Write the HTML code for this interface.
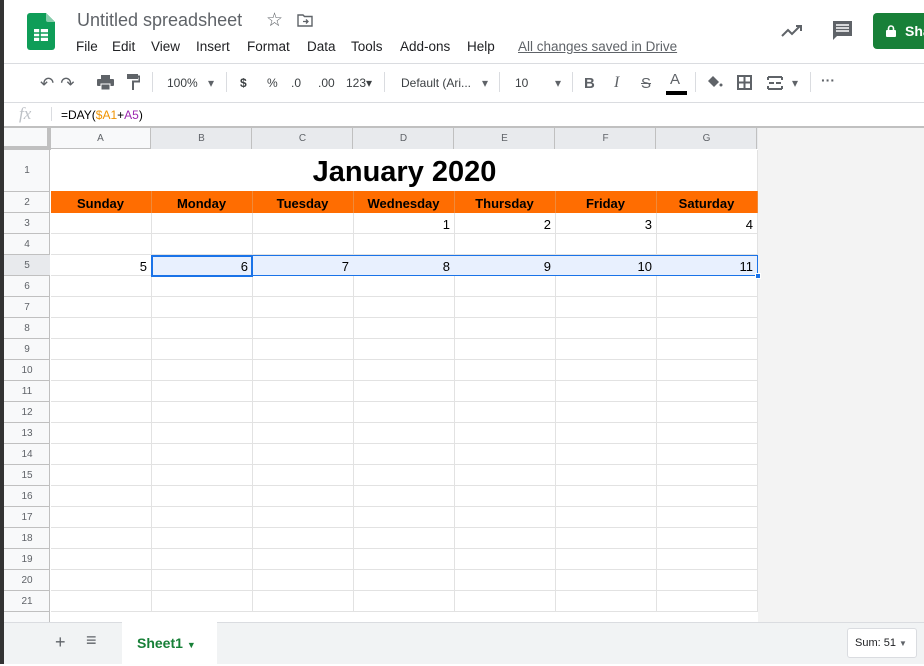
<!DOCTYPE html>
<html><head><meta charset="utf-8"><style>
*{margin:0;padding:0;box-sizing:border-box}
body{width:924px;height:664px;overflow:hidden;background:#fff;font-family:"Liberation Sans",Arial,sans-serif;position:relative;color:#202124}
.a{position:absolute}
.m{position:absolute;top:39px;font-size:13.5px;color:#202124;white-space:nowrap}
.tb{color:#5f6368;font-size:12px}
.rh{position:absolute;left:4px;width:46px;text-align:center;font-size:10px;color:#5f6368}
.ch{position:absolute;top:128px;height:21px;width:101px;text-align:center;font-size:10px;color:#5f6368;line-height:21px}
.day{position:absolute;top:192px;height:21px;width:101px;text-align:center;font-weight:bold;font-size:13px;line-height:23px;color:#000}
.n{position:absolute;width:97px;text-align:right;font-size:13px;color:#000;line-height:22px;height:21px}
</style></head><body>
<div class="a" style="left:0;top:0;width:4px;height:664px;background:#333"></div>
<svg class="a" style="left:27px;top:13px" width="28" height="37" viewBox="0 0 28 37"><path d="M3 0h16l9 9v25a3 3 0 0 1-3 3H3a3 3 0 0 1-3-3V3a3 3 0 0 1 3-3z" fill="#0f9d58"/><path d="M19 0l9 9h-7a2 2 0 0 1-2-2z" fill="#87ceac"/><rect x="7" y="16" width="14" height="12" fill="#fff"/><path d="M7 20h14M7 24h14M13 16v12" stroke="#0f9d58" stroke-width="1.6"/></svg>
<div class="a" style="left:77px;top:10px;font-size:18px;color:#5f6368">Untitled spreadsheet</div>
<div class="a" style="left:266px;top:9px;font-size:19px;color:#5f6368">☆</div>
<svg class="a" style="left:297px;top:14px" width="16" height="13" viewBox="0 0 16 13"><path d="M1 1h5l1.5 1.5H15V12H1z" fill="none" stroke="#5f6368" stroke-width="1.4"/><path d="M6 7.5h5M9 5.5l2 2-2 2" fill="none" stroke="#5f6368" stroke-width="1.3"/></svg>
<div class="m" style="left:76px">File</div><div class="m" style="left:112px">Edit</div><div class="m" style="left:151px">View</div><div class="m" style="left:196px">Insert</div><div class="m" style="left:247px">Format</div><div class="m" style="left:307px">Data</div><div class="m" style="left:351px">Tools</div><div class="m" style="left:400px">Add-ons</div><div class="m" style="left:467px">Help</div><div class="m" style="left:518px;color:#5f6368;text-decoration:underline">All changes saved in Drive</div>
<svg class="a" style="left:781px;top:24px" width="22" height="14" viewBox="0 0 22 14"><path d="M1 12l6-6 4 4 8-8" fill="none" stroke="#5f6368" stroke-width="2"/><path d="M15 2h5v5" fill="none" stroke="#5f6368" stroke-width="2"/></svg>
<svg class="a" style="left:832px;top:20px" width="21" height="21" viewBox="0 0 21 21"><path d="M1 1h19v15H5l-4 4z" fill="#5f6368"/><path d="M4 5h13M4 8h13M4 11h13" stroke="#fff" stroke-width="1.5"/></svg>
<div class="a" style="left:873px;top:13px;width:60px;height:36px;background:#188038;border-radius:4px;color:#fff;font-weight:bold;font-size:14px;line-height:36px;padding-left:32px">Sha</div>
<svg class="a" style="left:886px;top:25px" width="10" height="12" viewBox="0 0 10 12"><rect x="0" y="5" width="10" height="7" rx="1" fill="#fff"/><path d="M2.5 5V3.5a2.5 2.5 0 0 1 5 0V5" fill="none" stroke="#fff" stroke-width="1.6"/></svg>
<div class="a" style="left:4px;top:63px;width:920px;height:1px;background:#dadce0"></div>
<div class="a tb" style="left:40px;top:74px;font-size:17px;letter-spacing:6px">↶↷</div>
<svg class="a" style="left:97px;top:75px" width="17" height="15" viewBox="0 0 17 15"><rect x="0" y="4" width="17" height="7" rx="1" fill="#5f6368"/><rect x="4" y="0" width="9" height="4" fill="#5f6368"/><rect x="4" y="9" width="9" height="6" fill="#5f6368" stroke="#fff" stroke-width="1"/></svg>
<svg class="a" style="left:127px;top:74px" width="13" height="16" viewBox="0 0 13 16"><rect x="0" y="0" width="11" height="5" fill="#5f6368"/><path d="M11 2.5h1.5v5H6V16" fill="none" stroke="#5f6368" stroke-width="2"/></svg>
<div class="a" style="left:152px;top:72px;width:1px;height:20px;background:#dadce0"></div>
<div class="a tb" style="left:167px;top:76px;color:#3c4043">100%</div>
<div class="a tb" style="left:208px;top:76px">▾</div>
<div class="a" style="left:226px;top:72px;width:1px;height:20px;background:#dadce0"></div>
<div class="a tb" style="left:240px;top:76px;color:#3c4043;font-weight:bold">$</div>
<div class="a tb" style="left:267px;top:76px;color:#3c4043">%</div>
<div class="a tb" style="left:291px;top:76px;color:#3c4043">.0</div>
<div class="a tb" style="left:318px;top:76px;color:#3c4043">.00</div>
<div class="a tb" style="left:346px;top:76px;color:#3c4043">123▾</div>
<div class="a" style="left:384px;top:72px;width:1px;height:20px;background:#dadce0"></div>
<div class="a tb" style="left:401px;top:76px;color:#3c4043">Default (Ari...</div>
<div class="a tb" style="left:482px;top:76px">▾</div>
<div class="a" style="left:499px;top:72px;width:1px;height:20px;background:#dadce0"></div>
<div class="a tb" style="left:515px;top:76px;color:#3c4043">10</div>
<div class="a tb" style="left:555px;top:76px">▾</div>
<div class="a" style="left:572px;top:72px;width:1px;height:20px;background:#dadce0"></div>
<div class="a" style="left:584px;top:75px;font-size:15px;font-weight:bold;color:#5f6368">B</div>
<div class="a" style="left:614px;top:74px;font-size:16px;font-style:italic;font-family:'Liberation Serif',serif;color:#5f6368">I</div>
<div class="a" style="left:641px;top:75px;font-size:15px;text-decoration:line-through;color:#5f6368">S</div>
<div class="a" style="left:670px;top:71px;font-size:15px;color:#5f6368">A</div>
<div class="a" style="left:666px;top:91px;width:21px;height:4px;background:#000"></div>
<div class="a" style="left:695px;top:72px;width:1px;height:20px;background:#dadce0"></div>
<svg class="a" style="left:707px;top:75px" width="16" height="14" viewBox="0 0 16 14"><path d="M6 1l6 6-5 5-6-6z" fill="#5f6368"/><circle cx="14" cy="10" r="1.5" fill="#5f6368"/></svg>
<svg class="a" style="left:737px;top:75px" width="15" height="15" viewBox="0 0 15 15"><path d="M1 1h13v13H1zM7.5 1v13M1 7.5h13" fill="none" stroke="#5f6368" stroke-width="2"/></svg>
<svg class="a" style="left:767px;top:76px" width="16" height="14" viewBox="0 0 16 14"><path d="M1 1h14M1 13h14M1 1v3M15 1v3M1 10v3M15 10v3M2 7h5M9 7h5" fill="none" stroke="#5f6368" stroke-width="2"/></svg>
<div class="a tb" style="left:792px;top:76px">▾</div>
<div class="a" style="left:810px;top:72px;width:1px;height:20px;background:#dadce0"></div>
<div class="a tb" style="left:821px;top:72px;font-size:14px;font-weight:bold">···</div>
<div class="a" style="left:4px;top:102px;width:920px;height:1px;background:#dadce0"></div>
<div class="a" style="left:19px;top:104px;font-family:'Liberation Serif',serif;font-style:italic;font-size:17px;color:#bdc1c6">fx</div>
<div class="a" style="left:51px;top:107px;width:1px;height:14px;background:#dadce0"></div>
<div class="a" style="left:61px;top:108px;font-size:12px;color:#000">=DAY(<span style="color:#f09300">$A1</span>+<span style="color:#9c27b0">A5</span>)</div>
<div class="a" style="left:4px;top:126px;width:920px;height:2px;background:#c0c0c0"></div>
<div class="a" style="left:758px;top:128px;width:166px;height:494px;background:#f3f3f3"></div>
<div class="a" style="left:4px;top:128px;width:46px;height:494px;background:#f8f9fa;border-right:1px solid #c0c0c0"></div>
<div class="a" style="left:4px;top:128px;width:754px;height:21px;background:#f8f9fa;border-bottom:1px solid #c0c0c0"></div>
<div class="a" style="left:4px;top:128px;width:47px;height:22px;border-right:4px solid #c0c0c0;border-bottom:4px solid #c0c0c0"></div>
<div class="a" style="left:151px;top:128px;width:607px;height:21px;background:#e8eaed"></div>
<div class="a" style="left:50px;top:128px;width:708px;height:21px;background:repeating-linear-gradient(90deg,transparent 0 100px,#c0c0c0 100px 101px)"></div>
<div class="a" style="left:4px;top:255px;width:46px;height:21px;background:#e8eaed"></div>
<div class="a" style="left:51px;top:150px;width:707px;height:462px;background:repeating-linear-gradient(90deg,transparent 0 100px,#e2e2e2 100px 101px)"></div>
<div class="a" style="left:51px;top:213px;width:707px;height:400px;background:repeating-linear-gradient(180deg,transparent 0 20px,#e2e2e2 20px 21px)"></div>
<div class="a" style="left:51px;top:150px;width:706px;height:41px;background:#fff"></div>
<div class="a" style="left:757px;top:150px;width:1px;height:41px;background:#e2e2e2"></div>
<div class="a" style="left:4px;top:150px;width:46px;height:463px;background:linear-gradient(180deg,transparent 0 41px,#c0c0c0 41px 42px,transparent 42px 62px,#c0c0c0 62px 63px,transparent 63px),repeating-linear-gradient(180deg,transparent 0 20px,#c0c0c0 20px 21px) 0 63px/46px 400px no-repeat"></div>
<div class="a" style="left:51px;top:191px;width:707px;height:22px;background:#ff6d01"></div>
<div class="a" style="left:51px;top:191px;width:707px;height:22px;background:repeating-linear-gradient(90deg,transparent 0 100px,#f08a3a 100px 101px)"></div>
<div class="a" style="left:51px;top:612px;width:707px;height:10px;background:#fff"></div>
<div class="a" style="left:51px;top:611px;width:707px;height:1px;background:#e2e2e2"></div>
<div class="a" style="left:151px;top:255px;width:607px;height:21px;background:#e8f0fe;border:1px solid #1a73e8"></div>
<div class="a" style="left:151px;top:255px;width:102px;height:22px;border:2px solid #1a73e8"></div>
<div class="a" style="left:755px;top:273px;width:6px;height:6px;background:#1a73e8;border:1px solid #fff"></div>
<div class="ch" style="left:50px">A</div><div class="ch" style="left:151px">B</div><div class="ch" style="left:252px">C</div><div class="ch" style="left:353px">D</div><div class="ch" style="left:454px">E</div><div class="ch" style="left:555px">F</div><div class="ch" style="left:656px">G</div>
<div class="a" style="left:51px;top:156px;width:707px;text-align:center;font-size:29px;font-weight:bold;color:#000">January 2020</div>
<div class="day" style="left:50px">Sunday</div><div class="day" style="left:151px">Monday</div><div class="day" style="left:252px">Tuesday</div><div class="day" style="left:353px">Wednesday</div><div class="day" style="left:454px">Thursday</div><div class="day" style="left:555px">Friday</div><div class="day" style="left:656px">Saturday</div>
<div class="n" style="left:353px;top:214px">1</div><div class="n" style="left:454px;top:214px">2</div><div class="n" style="left:555px;top:214px">3</div><div class="n" style="left:656px;top:214px">4</div>
<div class="n" style="left:50px;top:256px">5</div><div class="n" style="left:151px;top:256px">6</div><div class="n" style="left:252px;top:256px">7</div><div class="n" style="left:353px;top:256px">8</div><div class="n" style="left:454px;top:256px">9</div><div class="n" style="left:555px;top:256px">10</div><div class="n" style="left:656px;top:256px">11</div>
<div class="rh" style="top:165px">1</div><div class="rh" style="top:197px">2</div>
<div class="rh" style="top:218px">3</div><div class="rh" style="top:239px">4</div><div class="rh" style="top:260px">5</div><div class="rh" style="top:281px">6</div><div class="rh" style="top:302px">7</div><div class="rh" style="top:323px">8</div><div class="rh" style="top:344px">9</div><div class="rh" style="top:365px">10</div><div class="rh" style="top:386px">11</div><div class="rh" style="top:407px">12</div><div class="rh" style="top:428px">13</div><div class="rh" style="top:449px">14</div><div class="rh" style="top:470px">15</div><div class="rh" style="top:491px">16</div><div class="rh" style="top:512px">17</div><div class="rh" style="top:533px">18</div><div class="rh" style="top:554px">19</div><div class="rh" style="top:575px">20</div><div class="rh" style="top:596px">21</div>
<div class="a" style="left:4px;top:622px;width:920px;height:42px;background:#f1f3f4;border-top:1px solid #dadce0"></div>
<div class="a" style="left:55px;top:632px;font-size:18px;color:#5f6368">+</div>
<div class="a" style="left:86px;top:630px;font-size:18px;color:#5f6368">≡</div>
<div class="a" style="left:122px;top:622px;width:95px;height:42px;background:#fff;color:#188038;font-size:14px;font-weight:bold;line-height:42px;padding-left:15px">Sheet1 <span style="font-size:9px">▼</span></div>
<div class="a" style="left:847px;top:628px;width:70px;height:30px;background:#fff;border:1px solid #dadce0;border-radius:3px;font-size:11px;line-height:28px;padding-left:7px;color:#202124">Sum: 51 <span style="font-size:8px;color:#5f6368">▼</span></div>
</body></html>
